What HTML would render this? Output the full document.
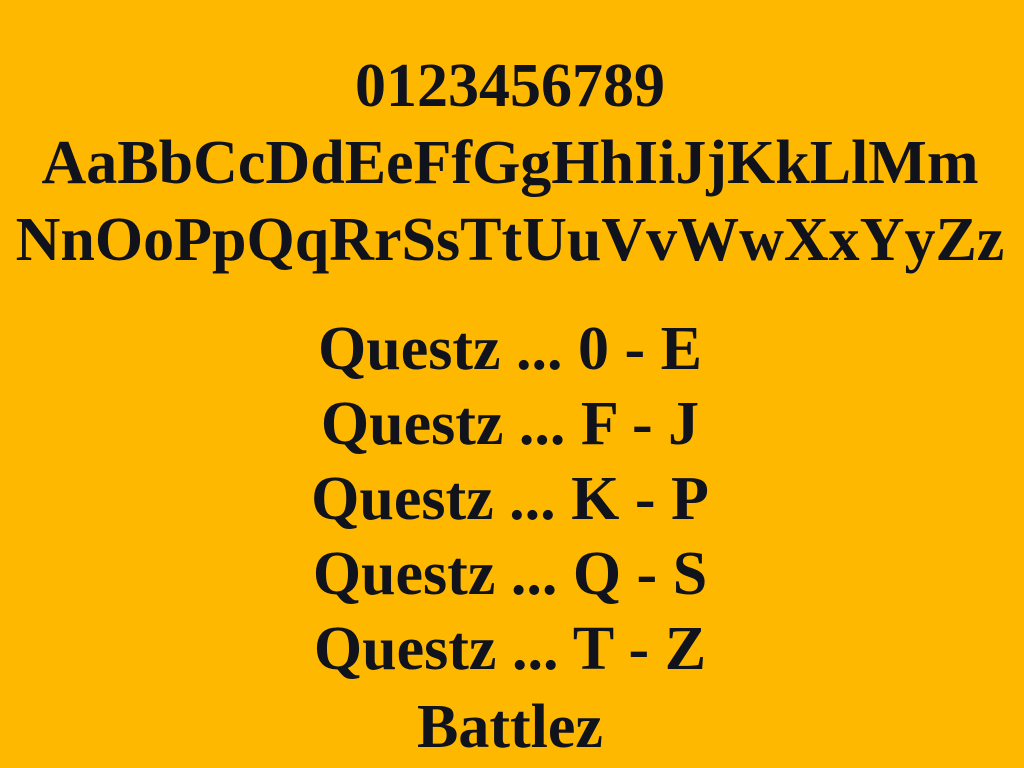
<!DOCTYPE html>
<html><head><meta charset="utf-8"><style>
html,body{margin:0;padding:0;}
body{width:1024px;height:768px;background:#FFB800;position:relative;overflow:hidden;}
.l{position:absolute;left:-2px;width:1024px;text-align:center;font-family:"Liberation Serif",serif;font-weight:bold;font-size:62px;line-height:62px;color:#10121c;white-space:nowrap;}
</style></head><body>
<div class="l" style="top:55px">0123456789</div>
<div class="l" style="top:132px">AaBbCcDdEeFfGgHhIiJjKkLlMm</div>
<div class="l" style="top:209px">NnOoPpQqRrSsTtUuVvWwXxYyZz</div>
<div class="l" style="top:318px">Questz ... 0 - E</div>
<div class="l" style="top:393px">Questz ... F - J</div>
<div class="l" style="top:468px">Questz ... K - P</div>
<div class="l" style="top:543px">Questz ... Q - S</div>
<div class="l" style="top:618px">Questz ... T - Z</div>
<div class="l" style="top:696px">Battlez</div>
</body></html>
